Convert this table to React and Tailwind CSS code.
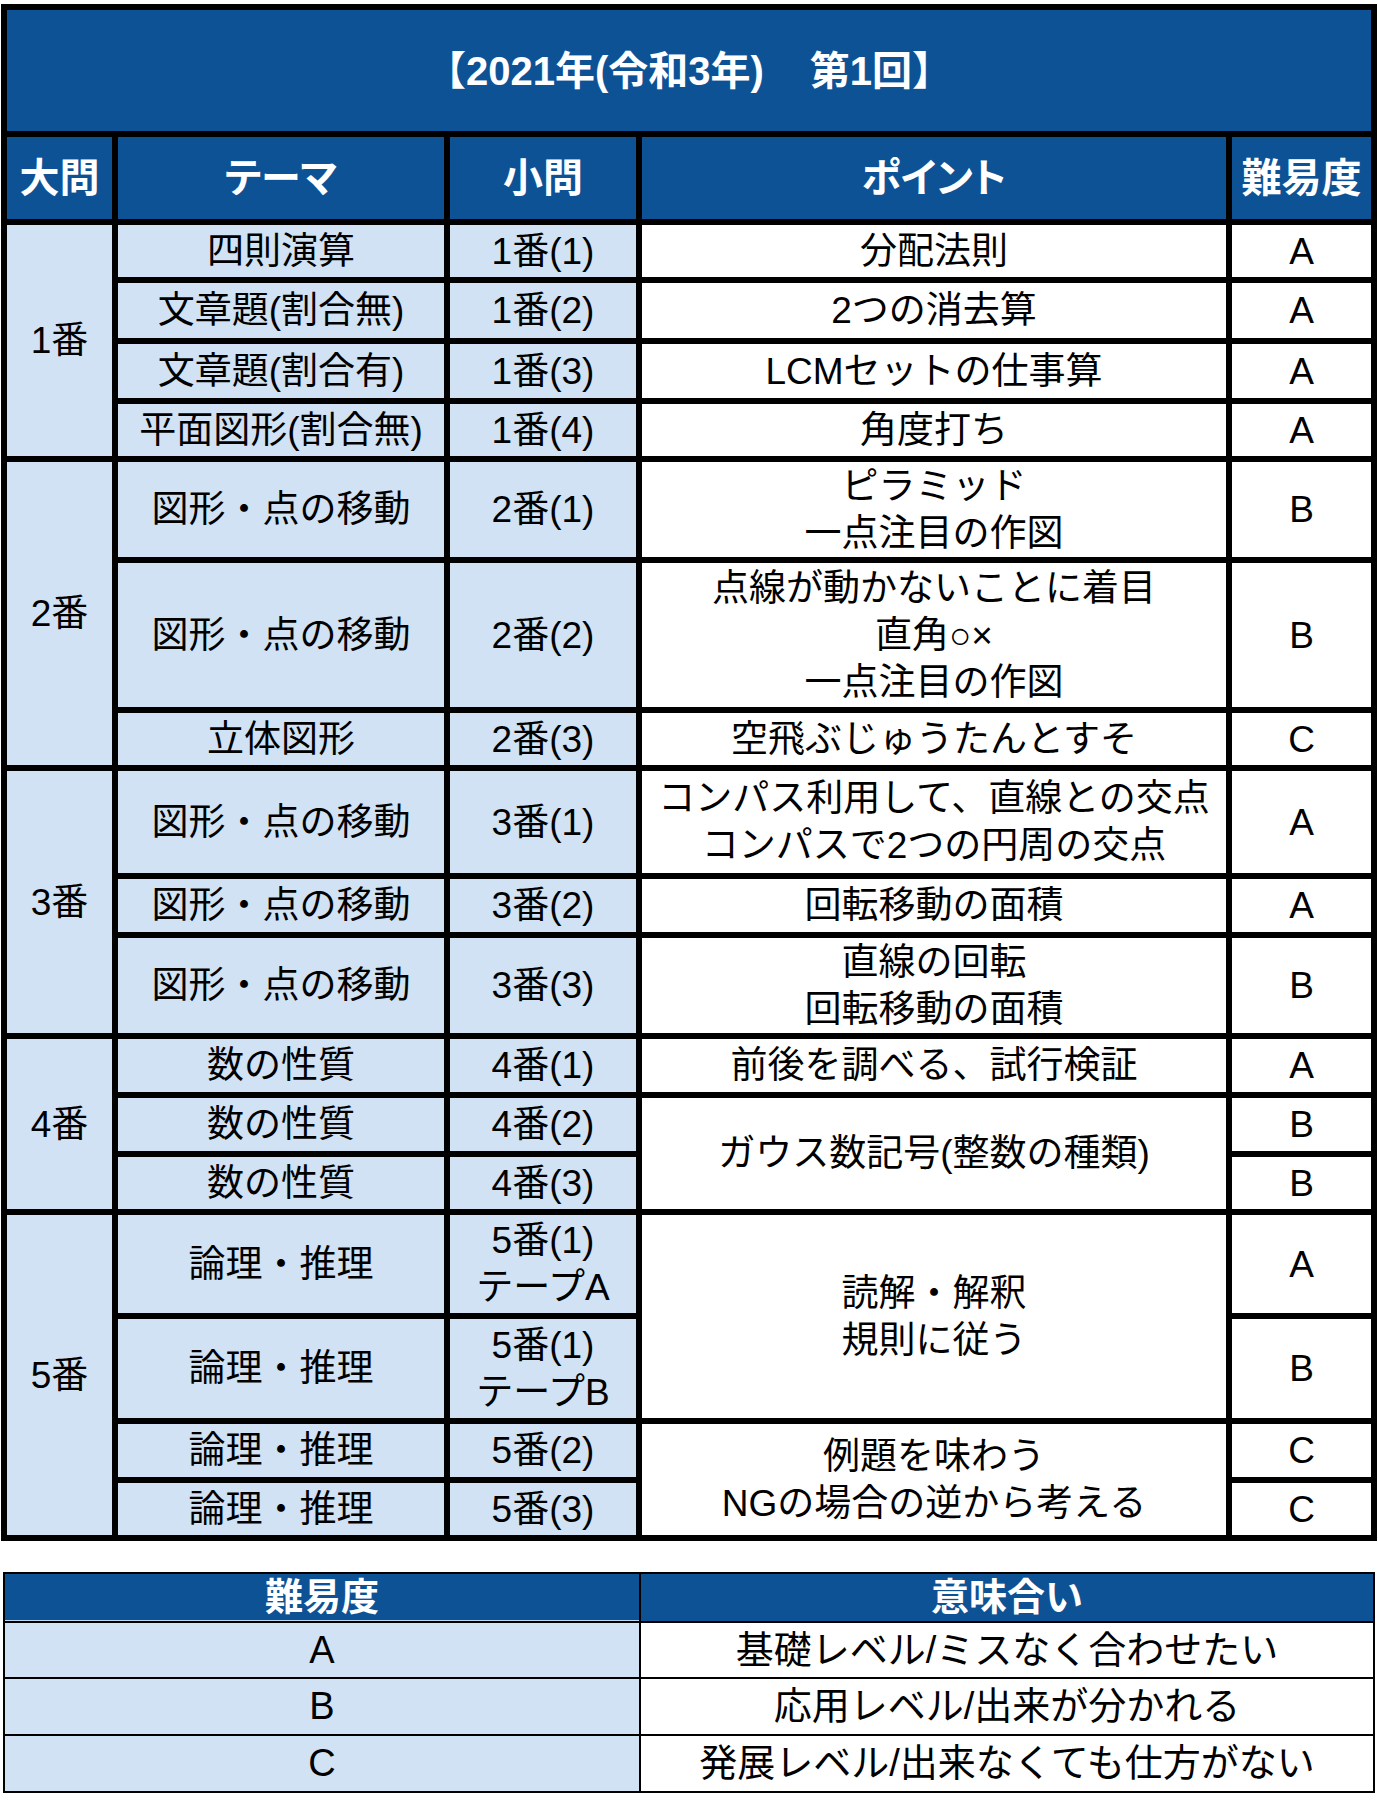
import React from 'react';

const rows = [
  { dai: '1番', span: 4, theme: '四則演算', sho: '1番(1)', point: '分配法則', lv: 'A' },
  { theme: '文章題(割合無)', sho: '1番(2)', point: '2つの消去算', lv: 'A' },
  { theme: '文章題(割合有)', sho: '1番(3)', point: 'LCMセットの仕事算', lv: 'A' },
  { theme: '平面図形(割合無)', sho: '1番(4)', point: '角度打ち', lv: 'A' },
  { dai: '2番', span: 3, theme: '図形・点の移動', sho: '2番(1)', point: ['ピラミッド', '一点注目の作図'], lv: 'B' },
  { theme: '図形・点の移動', sho: '2番(2)', point: ['点線が動かないことに着目', '直角○×', '一点注目の作図'], lv: 'B' },
  { theme: '立体図形', sho: '2番(3)', point: '空飛ぶじゅうたんとすそ', lv: 'C' },
  { dai: '3番', span: 3, theme: '図形・点の移動', sho: '3番(1)', point: ['コンパス利用して、直線との交点', 'コンパスで2つの円周の交点'], lv: 'A' },
  { theme: '図形・点の移動', sho: '3番(2)', point: '回転移動の面積', lv: 'A' },
  { theme: '図形・点の移動', sho: '3番(3)', point: ['直線の回転', '回転移動の面積'], lv: 'B' },
  { dai: '4番', span: 3, theme: '数の性質', sho: '4番(1)', point: '前後を調べる、試行検証', lv: 'A' },
  { theme: '数の性質', sho: '4番(2)', point: 'ガウス数記号(整数の種類)', pointSpan: 2, lv: 'B' },
  { theme: '数の性質', sho: '4番(3)', lv: 'B' },
  { dai: '5番', span: 4, theme: '論理・推理', sho: ['5番(1)', 'テープA'], point: ['読解・解釈', '規則に従う'], pointSpan: 2, lv: 'A' },
  { theme: '論理・推理', sho: ['5番(1)', 'テープB'], lv: 'B' },
  { theme: '論理・推理', sho: '5番(2)', point: ['例題を味わう', 'NGの場合の逆から考える'], pointSpan: 2, lv: 'C' },
  { theme: '論理・推理', sho: '5番(3)', lv: 'C' },
];

const spans = { 2: 'row-span-2', 3: 'row-span-3', 4: 'row-span-4' };

const levels = [
  { lv: 'A', text: '基礎レベル/ミスなく合わせたい' },
  { lv: 'B', text: '応用レベル/出来が分かれる' },
  { lv: 'C', text: '発展レベル/出来なくても仕方がない' },
];

function Cell({ className = '', children }) {
  const lines = Array.isArray(children) ? children : [children];
  return (
    <div className={`flex flex-col items-center justify-center text-center leading-[47px] whitespace-nowrap ${className}`}>
      {lines.map((line) => <span key={line}>{line}</span>)}
    </div>
  );
}

export default function App() {
  return (
    <div className="min-h-[1800px] bg-white pt-[4px] font-['Liberation_Sans','Noto_Sans_CJK_JP',sans-serif] text-black">
      <div className="ml-[1px] grid w-[1376px] grid-cols-[105px_326px_186px_584px_139px] grid-rows-[121px_82px_52px_55px_54px_52px_95px_144px_52px_102px_53px_95px_53px_53px_52px_98px_99px_53px_52px] gap-[6px] bg-black p-[6px] text-[37px]">
        <div className="col-span-5 flex items-center justify-center bg-[#0E5296] text-[40px] font-bold text-white">
          <span>【2021年(令和3年)</span>
          <span className="ml-[46px]">第1回】</span>
        </div>
        {['大問', 'テーマ', '小問', 'ポイント', '難易度'].map((h) => (
          <Cell key={h} className="bg-[#0E5296] text-[40px] font-bold text-white [font-feature-settings:'palt']">{h}</Cell>
        ))}
        {rows.map((r, i) => (
          <React.Fragment key={i}>
            {r.dai && <Cell className={`${spans[r.span]} bg-[#D0E2F3]`}>{r.dai}</Cell>}
            <Cell className="bg-[#D0E2F3]">{r.theme}</Cell>
            <Cell className="bg-[#D0E2F3]">{r.sho}</Cell>
            {r.point && <Cell className={`${r.pointSpan ? spans[r.pointSpan] : ''} bg-white`}>{r.point}</Cell>}
            <Cell className="bg-white">{r.lv}</Cell>
          </React.Fragment>
        ))}
      </div>

      <div className="ml-[3px] mt-[31px] grid w-[1372px] grid-cols-[634px_1fr] grid-rows-[47px_54px_55px_55px] gap-[2px] border-2 border-black bg-black text-[38px]">
        <Cell className="border-b border-[#BDD7EE] bg-[#0E5296] font-bold text-white">難易度</Cell>
        <Cell className="bg-[#0E5296] font-bold text-white">意味合い</Cell>
        {levels.map((l) => (
          <React.Fragment key={l.lv}>
            <Cell className="bg-[#D0E2F3]">{l.lv}</Cell>
            <Cell className="bg-white">{l.text}</Cell>
          </React.Fragment>
        ))}
      </div>
    </div>
  );
}
